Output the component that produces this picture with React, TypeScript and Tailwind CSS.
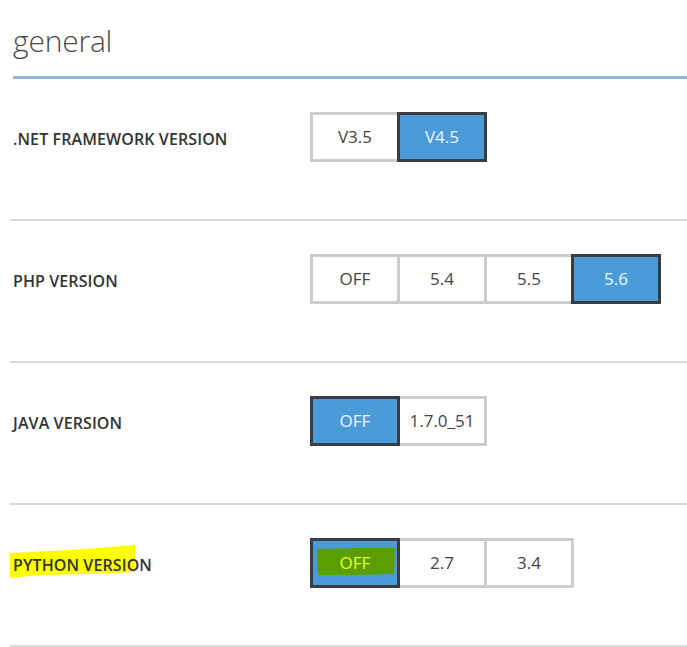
import React from "react";

type Row = { label: string; options: string[]; selected: number; highlight?: boolean };

const rows: Row[] = [
  { label: ".NET FRAMEWORK VERSION", options: ["V3.5", "V4.5"], selected: 1 },
  { label: "PHP VERSION", options: ["OFF", "5.4", "5.5", "5.6"], selected: 3 },
  { label: "JAVA VERSION", options: ["OFF", "1.7.0_51"], selected: 0 },
  { label: "PYTHON VERSION", options: ["OFF", "2.7", "3.4"], selected: 0, highlight: true },
];

const font = { fontFamily: '"Open Sans", "Noto Sans", sans-serif' };

export default function App() {
  return (
    <div className="relative w-[687px] h-[647px] bg-white overflow-hidden" style={font}>
      <div className="pl-[13px] pt-[21px] h-[76px]">
        <div className="text-[30px] leading-[40px] font-light text-[#4a4a4a] tracking-[-0.2px]">general</div>
      </div>
      <div className="ml-[13px] h-[3px] bg-[#8cb5dc]" />
      {rows.map((row, ri) => (
        <div key={ri} className="ml-[10px] h-[142px] border-b-2 border-[#d9d9d9] pt-[33px]">
          <div className="flex items-center h-[50px]">
            <div className="relative w-[300px] pl-[3px] pt-[3px]">
              {row.highlight && (
                <svg className="absolute left-0 top-[-6px]" width="130" height="36" viewBox="0 0 130 36">
                  <path d="M0 9 L60 6 L100 3 L125 1 L125 28 L80 30 L30 31 L0 34 Z" fill="#ffff00" />
                </svg>
              )}
              <span className="relative text-[16px] font-semibold text-[#333] tracking-[0.1px]">{row.label}</span>
            </div>
            <div className="flex">
              {row.options.map((opt, oi) => {
                const sel = oi === row.selected;
                return (
                  <div
                    key={oi}
                    className={
                      "relative w-[90px] h-[50px] border-[3px] flex items-center justify-center text-[17px] " +
                      (oi > 0 ? "-ml-[3px] " : "") +
                      (sel
                        ? "z-10 border-[#393c40] bg-[#4a9bd8] text-[#eef6fd]"
                        : "border-[#cccccc] bg-white text-[#444]")
                    }
                  >
                    {sel && row.highlight && (
                      <svg className="absolute left-[3px] top-[6px]" width="80" height="29" viewBox="0 0 80 29">
                        <path d="M1 2 L40 1 L79 1 L78 27 L40 28 L2 28 Z" fill="#5a9e00" />
                      </svg>
                    )}
                    <span className={"relative " + (sel && row.highlight ? "text-[#e6ff2a]" : "")}>{opt}</span>
                  </div>
                );
              })}
            </div>
          </div>
        </div>
      ))}
    </div>
  );
}
